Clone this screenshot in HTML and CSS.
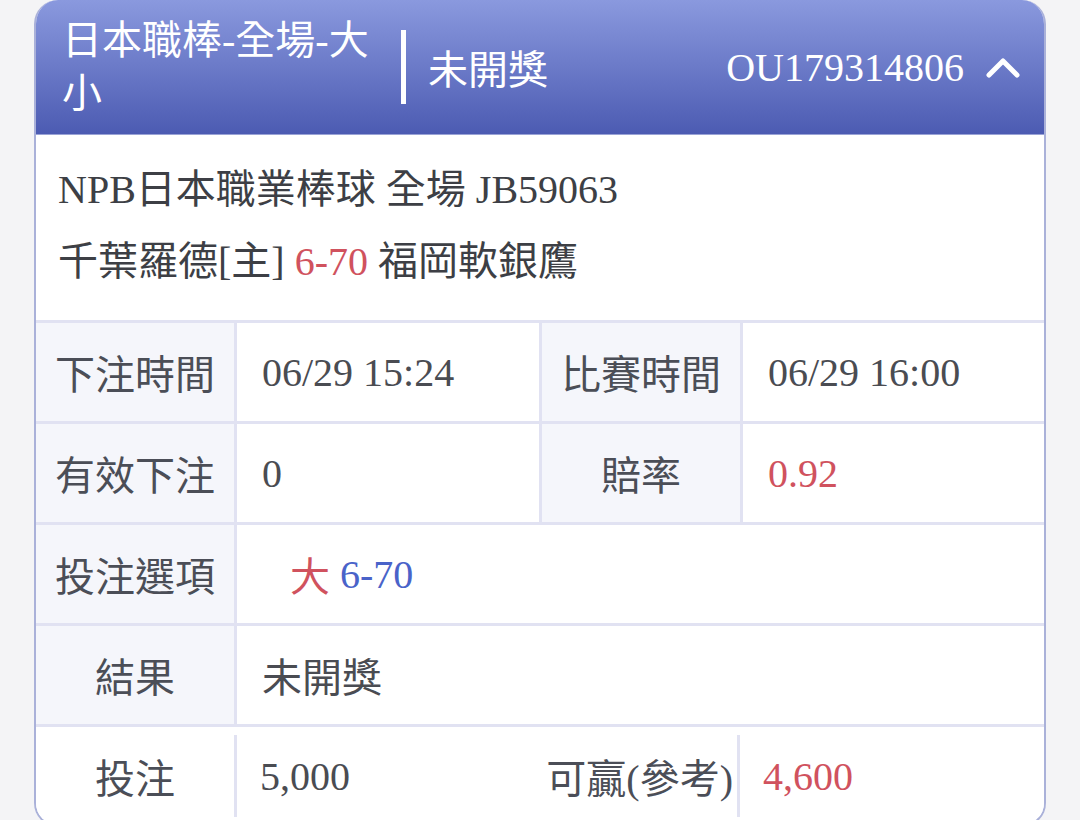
FILE: index.html
```html
<!DOCTYPE html>
<html lang="zh-Hant">
<head>
    <meta charset="UTF-8">
    <meta name="viewport" content="width=device-width, initial-scale=1.0">
    <title>注單詳情</title>
    <link rel="stylesheet" href="styles.css">
</head>
<body>
    <div class="card">
        <header class="card-head">
            <div class="head-title">日本職棒-全場-大小</div>
            <span class="head-bar"></span>
            <div class="head-status">未開獎</div>
            <div class="head-right">
                <span class="head-id">OU179314806</span>
                <svg class="chevron" width="34" height="22" viewBox="0 0 34 22">
                    <polyline points="3,19 17,5 31,19" fill="none" stroke="#fff" stroke-width="5" stroke-linecap="round" stroke-linejoin="round"/>
                </svg>
            </div>
        </header>

        <div class="info">
            <div>NPB日本職業棒球 全場 JB59063</div>
            <div>千葉羅德[主] <span class="red">6-70</span> 福岡軟銀鷹</div>
        </div>

        <div class="grid">
            <div class="label">下注時間</div>
            <div class="value">06/29 15:24</div>
            <div class="label">比賽時間</div>
            <div class="value">06/29 16:00</div>

            <div class="label">有效下注</div>
            <div class="value">0</div>
            <div class="label">賠率</div>
            <div class="value red">0.92</div>

            <div class="label">投注選項</div>
            <div class="value wide pick"><span class="red">大</span>&nbsp;<span class="blue">6-70</span></div>

            <div class="label">結果</div>
            <div class="value wide">未開獎</div>
        </div>

        <div class="last-row">
            <div class="label plain">投注</div>
            <div class="value split">5,000</div>
            <div class="label plain right">可贏(參考)</div>
            <div class="value split red">4,600</div>
        </div>
    </div>
</body>
</html>
```

FILE: styles.css
```css
body{
    margin: 0;
    background-color: #f4f4f6;
    font-family: "Liberation Serif", "Noto Sans CJK TC", serif;
    color: #4a4c54;
}

.card{
    width: 1012px;
    margin-left: 34px;
    box-sizing: border-box;
    border: 2px solid #aab1d9;
    border-top: none;
    border-radius: 24px;
    overflow: hidden;
    background-color: #fff;
}

.card-head{
    display: flex;
    align-items: center;
    height: 135px;
    box-sizing: border-box;
    background: linear-gradient(to bottom, #8a99de, #4c5bb2);
    border-bottom: 1px solid #9aa3d6;
    color: #fff;
    font-size: 40px;
}

.head-title{
    width: 315px;
    padding-left: 26px;
    line-height: 53px;
}

.head-bar{
    width: 5px;
    height: 74px;
    margin-left: 24px;
    background-color: #fff;
}

.head-status{
    margin-left: 22px;
}

.head-right{
    margin-left: auto;
    padding-right: 24px;
    display: flex;
    align-items: center;
    gap: 22px;
}

.info{
    padding: 19px 22px 22px;
    font-size: 40px;
    line-height: 72px;
    color: #3d3f45;
    border-bottom: 3px solid #e1e2f2;
}

.grid{
    display: grid;
    grid-template-columns: 198px 302px 198px 1fr;
    grid-auto-rows: 98px;
    gap: 3px;
    padding-bottom: 3px;
    background-color: #e1e2f2;
    font-size: 40px;
}

.label{
    display: flex;
    align-items: center;
    justify-content: center;
    background-color: #f5f6fb;
    color: #4b4e57;
}

.value{
    display: flex;
    align-items: center;
    padding-left: 25px;
    background-color: #fff;
    color: #4a4c52;
}

.red,
.value.red{
    color: #d0525e;
}

.blue{
    color: #4a63c9;
}

.wide{
    grid-column: 2 / 5;
}

.pick{
    padding-left: 53px;
}

.last-row{
    display: grid;
    grid-template-columns: 198px 305px 198px 1fr;
    height: 98px;
    font-size: 40px;
}

.label.plain{
    background-color: #fff;
}

.label.right{
    justify-content: flex-end;
    padding-right: 4px;
}

.value.split{
    margin: 8px 0;
    padding-left: 23px;
    border-left: 3px solid #e1e2f2;
}
```
